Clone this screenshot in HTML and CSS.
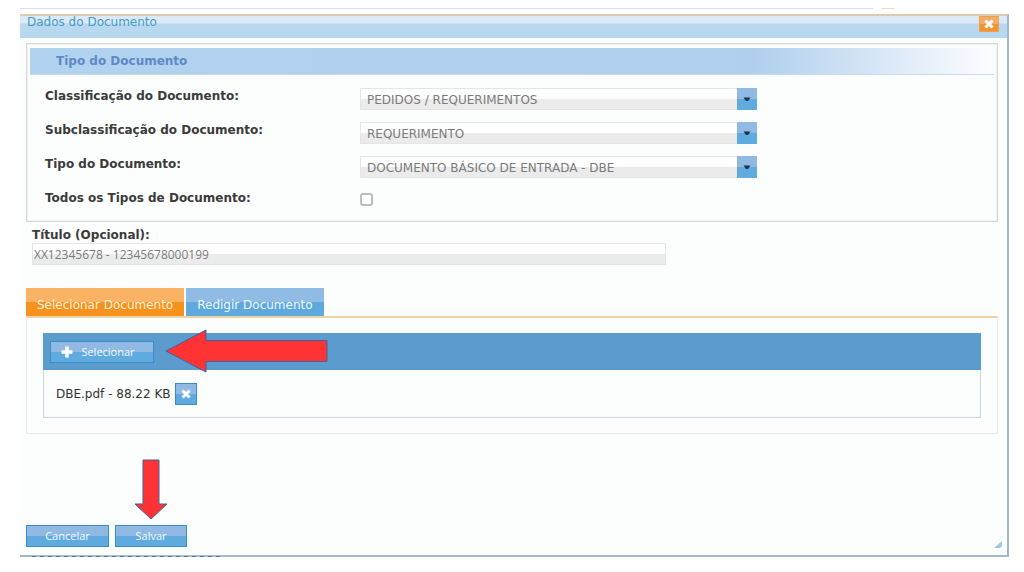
FILE: index.html
```html
<!DOCTYPE html>
<html lang="pt-BR">
<head>
<meta charset="utf-8">
<title>Dados do Documento</title>
<link rel="stylesheet" href="styles.css">
</head>
<body>
<div class="page">
  <div class="page-rule"><span class="rule-line"></span><span class="rule-accent"></span></div>
  <section class="dialog" role="dialog" aria-labelledby="dialog-title">
    <header class="titlebar">
      <h1 class="title" id="dialog-title">Dados do Documento</h1>
      <button class="close" type="button" aria-label="Fechar">
        <svg width="10" height="10" viewBox="0 0 10 10"><path d="M1.5 1.5l7 7M8.500 1.5l-7 7" stroke="#fff" stroke-width="3"/></svg>
      </button>
    </header>
    <form class="content">
      <div class="group">
        <h2 class="group-title">Tipo do Documento</h2>
        <div class="fields">
          <label class="label" for="classificacao">Classificação do Documento:</label>
          <div class="combo">
            <select class="select" id="classificacao"><option>PEDIDOS / REQUERIMENTOS</option></select>
            <svg class="combo-arrow" viewBox="0 0 20 22"><path d="M6.500 9.500h7l-2.500 3.500h-2z" fill="#17354f"/></svg>
          </div>
          <label class="label" for="subclassificacao">Subclassificação do Documento:</label>
          <div class="combo">
            <select class="select" id="subclassificacao"><option>REQUERIMENTO</option></select>
            <svg class="combo-arrow" viewBox="0 0 20 22"><path d="M6.500 9.500h7l-2.500 3.500h-2z" fill="#17354f"/></svg>
          </div>
          <label class="label" for="tipo">Tipo do Documento:</label>
          <div class="combo">
            <select class="select" id="tipo"><option>DOCUMENTO BÁSICO DE ENTRADA - DBE</option></select>
            <svg class="combo-arrow" viewBox="0 0 20 22"><path d="M6.500 9.500h7l-2.500 3.500h-2z" fill="#17354f"/></svg>
          </div>
          <label class="label" for="todos">Todos os Tipos de Documento:</label>
          <div class="check"><input class="checkbox" type="checkbox" id="todos"></div>
        </div>
      </div>
      <div class="title-field">
        <label class="label" for="titulo">Título (Opcional):</label>
        <input class="text" id="titulo" type="text" value="XX12345678 - 12345678000199">
      </div>
      <div class="tabs" role="tablist">
        <button class="tab tab-active" type="button" role="tab" aria-selected="true">Selecionar Documento</button>
        <button class="tab" type="button" role="tab" aria-selected="false">Redigir Documento</button>
      </div>
      <div class="panel" role="tabpanel">
        <div class="upload">
          <div class="upload-bar">
            <button class="button choose" type="button">
              <svg width="12" height="12" viewBox="0 0 12 12"><path d="M6 0.500v11M0.500 6h11" stroke="#fff" stroke-width="3.500"/></svg>
              Selecionar
            </button>
            <svg class="arrow-left" width="164" height="44" viewBox="0 0 164 44"><path d="M2 22L42 1V11.500H163V32.500H42V43z" fill="#f33" stroke="#3f62a3"/></svg>
          </div>
          <div class="file">
            <span>DBE.pdf - 88.22 KB</span>
            <button class="button remove" type="button" aria-label="Remover">
              <svg width="10" height="10" viewBox="0 0 10 10"><path d="M1.500 1.500l7 7M8.500 1.500l-7 7" stroke="#fff" stroke-width="3"/></svg>
            </button>
          </div>
        </div>
      </div>
      <footer class="actions">
        <button class="button cancel" type="button">Cancelar</button>
        <div class="save-wrap">
          <svg class="arrow-down" width="34" height="61" viewBox="0 0 34 61"><path d="M9 1H25V45H33L17 60L1 45H9z" fill="#f33" stroke="#3f62a3"/></svg>
          <button class="button save" type="submit">Salvar</button>
        </div>
      </footer>
    </form>
    <svg class="grip" width="9" height="8" viewBox="0 0 9 8"><path d="M0 7L8 0V5L6 7z" fill="#a3c4e0"/></svg>
    <span class="behind"></span>
  </section>
</div>
</body>
</html>
```
FILE: styles.css
```css
* { box-sizing: border-box; }
body {
  margin: 0;
  background: #fff;
  color: #333;
  font: 12px/16px "DejaVu Sans", Verdana, sans-serif;
}
button, select, input { margin: 0; font: inherit; }
h1, h2 { margin: 0; font-size: 12px; }
.page { padding: 8px 15px 16px 20px; }
.page-rule { display: flex; gap: 8px; height: 6px; padding-right: 114px; }
.rule-line { flex: 1; height: 1px; background: #dcdfe8; }
.rule-accent { width: 14px; height: 1px; background: #f1dfc5; }
.dialog {
  position: relative;
  border-top: 2px solid #dccbb0;
  border-right: 2px solid #9fb8d0;
  border-bottom: 2px solid #a5bac9;
  background: #fcfefd;
}
.titlebar {
  display: flex;
  justify-content: space-between;
  align-items: flex-start;
  height: 22px;
  padding: 0 8px 0 7px;
  background: linear-gradient(#dce9f6 0 7px, #b8d8ef 8px);
}
.title { font-weight: 400; line-height: 12px; color: #3f9cc8; }
.close {
  display: grid;
  place-items: center;
  width: 20px;
  height: 16px;
  padding: 0;
  border: 1px solid #eda14e;
  background: linear-gradient(#f0ac68 50%, #f3952c 50%);
}
.content { padding: 5px 9px 8px 6px; }
.group { padding: 4px 3px 9px; border: 1px solid #d9d8d4; outline: 1px solid #f1f0ee; outline-offset: -2px; }
.group-title {
  height: 27px;
  padding-left: 26px;
  border-bottom: 1px solid #c9dcee;
  background: linear-gradient(90deg, #b2d3ef, #afcfed 75%, #fdfdff);
  font-weight: 700;
  line-height: 27px;
  color: #5d89c8;
}
.fields {
  display: grid;
  grid-template-columns: 315px minmax(0, 397px);
  grid-auto-rows: 22px;
  row-gap: 12px;
  padding: 13px 0 0 15px;
}
.label { font-weight: 700; color: #3b3b3b; }
.combo { position: relative; }
.select {
  display: block;
  width: 100%;
  height: 22px;
  padding: 2px 24px 0 6px;
  border: 1px solid #e5e5e5;
  border-radius: 0;
  appearance: none;
  background: linear-gradient(#fff 50%, #ebebeb 50%);
  color: #7b7b7b;
}
.combo-arrow {
  position: absolute;
  top: 0;
  right: 0;
  width: 20px;
  height: 22px;
  background: linear-gradient(#90bae4 50%, #5faade 50%);
  pointer-events: none;
}
.check { padding-top: 3px; }
.checkbox {
  display: block;
  width: 13px;
  height: 13px;
  border: 2px solid #bcbcbc;
  border-radius: 3px;
  appearance: none;
  background: #fff;
}
.title-field { display: flex; flex-direction: column; padding: 5px 6px 0; }
.text {
  width: 66%;
  height: 22px;
  padding: 0 1px;
  border: 1px solid #e5e5e5;
  background: linear-gradient(#fff 50%, #ebebeb 50%);
  font-family: "Open Sans", sans-serif;
  color: #7b7b7b;
}
.tabs { display: flex; gap: 2px; margin-top: 23px; }
.tab {
  height: 28px;
  padding: 5px 11px 0;
  border: 0;
  background: linear-gradient(#8fbbe5 50%, #5fa9dd 50%);
  color: #f2f8fd;
}
.tab-active { background: linear-gradient(#fab364 50%, #f7921e 50%); color: #fff3df; }
.panel { padding: 15px 16px; border: 1px solid #e7e9ea; border-top: 2px solid #ecd2a4; }
.upload { border: 1px solid #c5d7e4; }
.upload-bar {
  position: relative;
  display: flex;
  align-items: center;
  height: 37px;
  margin: -1px -1px 0;
  padding-left: 7px;
  background: #5b9bcd;
}
.button {
  display: flex;
  align-items: center;
  justify-content: center;
  height: 22px;
  padding: 0;
  border: 1px solid #388ec9;
  background: linear-gradient(#90bae4 50%, #5faade 50%);
  font-family: "Open Sans", sans-serif;
  font-size: 11px;
  color: #f4faff;
}
.choose { gap: 8px; width: 104px; padding-right: 8px; }
.arrow-left { position: absolute; top: -4px; left: 121px; }
.file { display: flex; align-items: center; gap: 4px; height: 47px; padding-left: 12px; }
.remove { width: 22px; }
.actions { display: flex; gap: 6px; margin-top: 91px; }
.cancel { width: 83px; }
.save-wrap { position: relative; }
.save { width: 72px; }
.arrow-down { position: absolute; bottom: 27px; left: 19px; }
.grip { position: absolute; right: 4px; bottom: 6px; }
.behind {
  position: absolute;
  bottom: -2px;
  left: 12px;
  width: 190px;
  height: 1px;
  background: repeating-linear-gradient(90deg, #5b7890 0 4px, #a5bac9 4px 8px);
}
```
